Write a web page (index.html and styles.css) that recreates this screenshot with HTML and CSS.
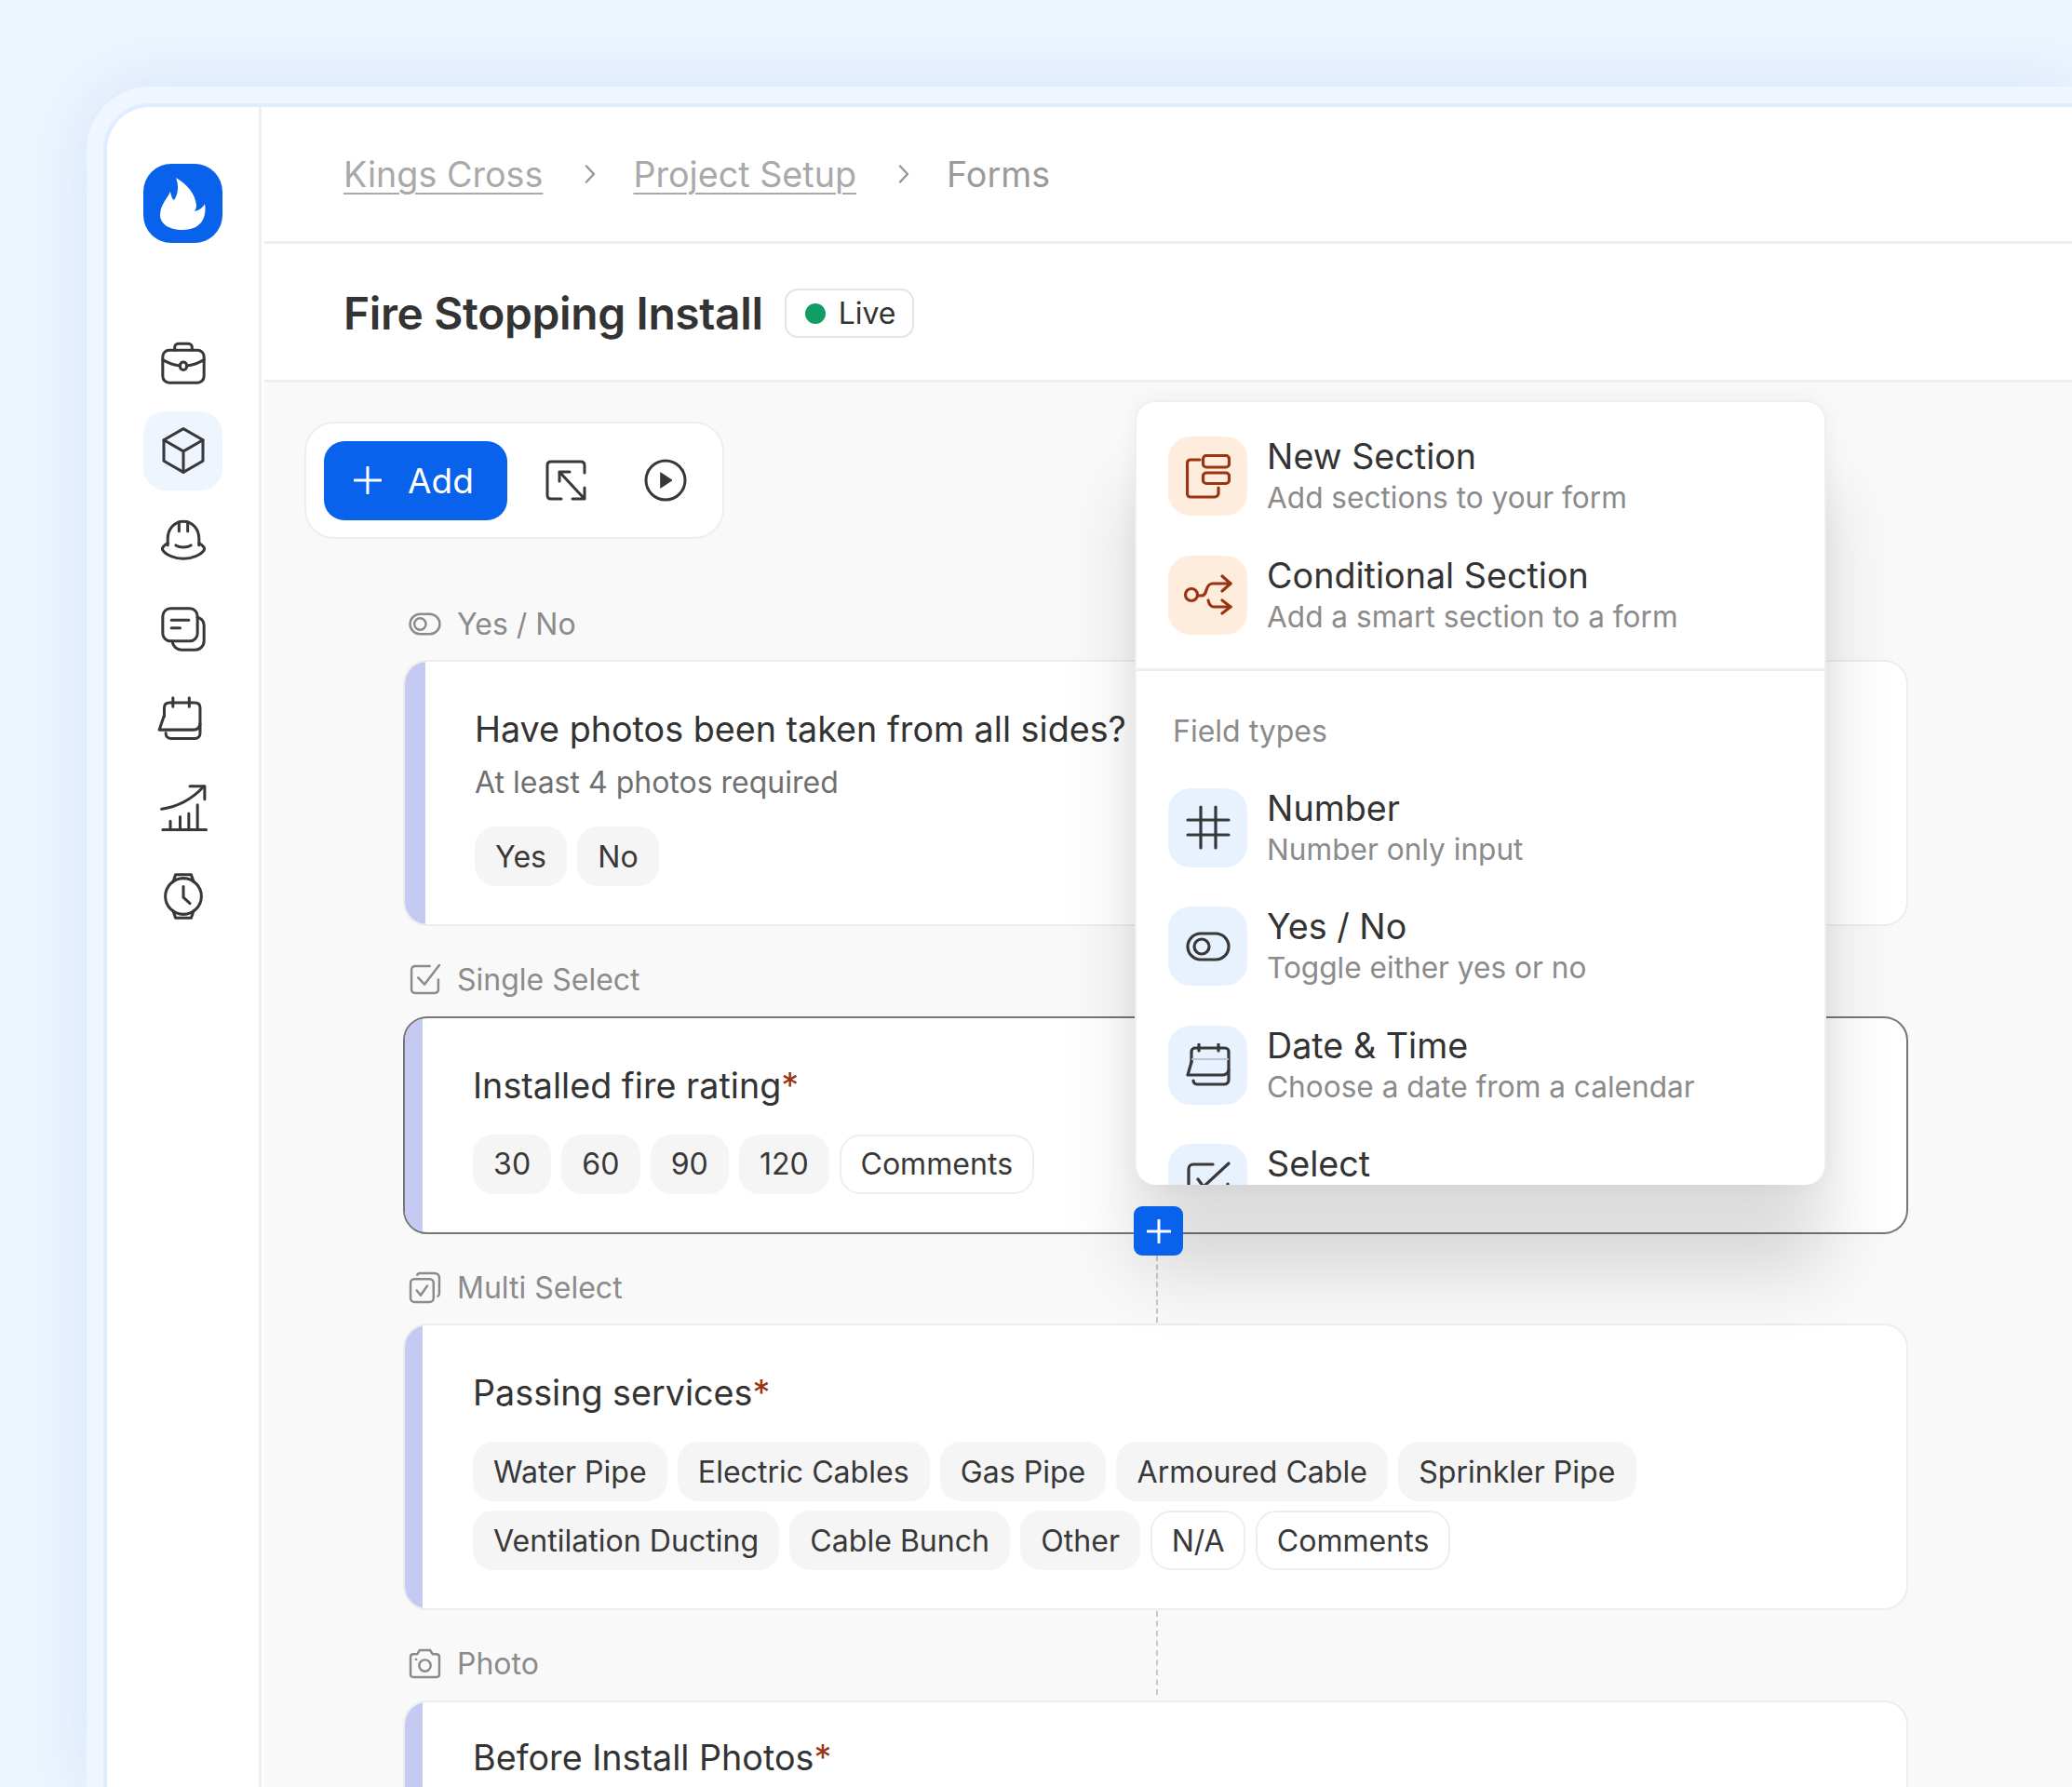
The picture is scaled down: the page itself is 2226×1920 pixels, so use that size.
FILE: index.html
```html
<!DOCTYPE html>
<html lang="en">
<head>
    <meta charset="UTF-8">
    <title>Fire Stopping Install</title>
    <meta name="viewport" content="width=device-width, initial-scale=1">
    <link rel="stylesheet" href="styles.css">
</head>

<body>
<div class="frame">
    <div class="window">
        <nav class="sidebar">
            <div class="logo">
                <svg viewBox="0 0 85 85" width="85" height="85"><path fill="#fff" d="M35 15C47 22 56 32 57 45C57 47 56 49 55 51C60 50 64 47 66 43C68 54 65 71 42 71C27 71 18 64 18 55C18 45 25 38 29 30C30 35 31 38 33 39C38 32 38 23 35 15Z"/></svg>
            </div>
            <div class="nav-list">
                <a class="nav-item">
                    <svg class="nav-icon" viewBox="0 0 24 24"><rect x="2.5" y="6.5" width="19" height="15" rx="3"/><path d="M8 6.5V5.2C8 4.2 8.7 3.5 9.7 3.5H14.3C15.3 3.5 16 4.2 16 5.2V6.5"/><path d="M2.5 11C6 13 8.5 13.5 10.5 13.7M13.5 13.7C15.5 13.5 18 13 21.5 11"/><rect x="10.5" y="12" width="3" height="3.6" rx="1.5"/></svg>
                </a>
                <a class="nav-item active">
                    <svg class="nav-icon" viewBox="0 0 24 24"><path d="M12 2L21 7.2V16.8L12 22L3 16.8V7.2Z"/><path d="M3 7.2L12 12.4L21 7.2M12 12.4V22"/></svg>
                </a>
                <a class="nav-item">
                    <svg class="nav-icon" viewBox="0 0 24 24"><path d="M4.8 14.5V11.5C4.8 7 8 3.5 12 3.5S19.2 7 19.2 11.5V14.5"/><path d="M10 3.8V8M14 3.8V8"/><path d="M4.8 13.5C3.2 14.5 1.8 15.7 2.5 16.8C4 19 8 20.7 12 20.7S20 19 21.5 16.8C22.2 15.7 20.8 14.5 19.2 13.5"/><path d="M8.5 14.5C10 15.7 14 15.7 15.5 14.5"/></svg>
                </a>
                <a class="nav-item">
                    <svg class="nav-icon" viewBox="0 0 24 24"><rect x="2.5" y="2.5" width="16" height="15" rx="3.5"/><path d="M18.4 6.5C20.3 7 21.5 8.4 21.5 10.2V17.5C21.5 19.7 19.7 21.5 17.5 21.5H11C9 21.5 7.2 20 6.8 17.5"/><path d="M6.5 7.8H14.5M6.5 11.5H10.5"/></svg>
                </a>
                <a class="nav-item">
                    <svg class="nav-icon" viewBox="0 0 24 24"><path d="M3.2 11V7C3.2 5.5 4.2 4.7 5.7 4.7H17.2C18.7 4.7 19.7 5.5 19.7 7V18.7C19.7 20.2 18.7 21.2 17.2 21.2H6.4C4.9 21.2 3.9 20.2 3.9 18.7"/><path d="M3.2 10.5L0.9 17.2H16.7C18.4 17.2 19.4 16 19.7 14.5"/><path d="M7.2 2.5V6.5M14.7 2.5V6.5"/></svg>
                </a>
                <a class="nav-item">
                    <svg class="nav-icon" viewBox="0 0 24 24"><path d="M2.5 22.5H22.5M6 22V18.5M10.5 22V16.5M14.5 22V15M18.5 22V11"/><path d="M2 13C9 12 15.5 9 21.5 2.5"/><path d="M15 2.5H21.8V8.5"/></svg>
                </a>
                <a class="nav-item">
                    <svg class="nav-icon" viewBox="0 0 24 24"><circle cx="12" cy="12" r="8.3"/><path d="M7.3 5.2L8.4 2H15.6L16.7 5.2M7.3 18.8L8.4 22H15.6L16.7 18.8"/><path d="M12 7.5V12.5L15 15.3"/></svg>
                </a>
            </div>
        </nav>

        <div class="main">
            <header class="crumbs">
                <a class="crumb-link">Kings Cross</a>
                <svg class="crumb-sep" viewBox="0 0 14 20"><path d="M3 1.5L11 10L3 18.5"/></svg>
                <a class="crumb-link">Project Setup</a>
                <svg class="crumb-sep" viewBox="0 0 14 20"><path d="M3 1.5L11 10L3 18.5"/></svg>
                <span class="crumb-current">Forms</span>
            </header>

            <div class="title-row">
                <h1 class="page-title">Fire Stopping Install</h1>
                <span class="badge"><i class="badge-dot"></i>Live</span>
            </div>

            <div class="content">
                <div class="toolbar">
                    <button type="button" class="add-button">
                        <svg viewBox="0 0 30 30" width="30" height="30"><path d="M15 1V29M1 15H29"/></svg>
                        Add
                    </button>
                    <svg class="tool-icon tool-expand" viewBox="0 0 44 44"><path d="M17 42H6C3.5 42 2 40.5 2 38V6C2 3.5 3.5 2 6 2H38C40.5 2 42 3.5 42 6V14"/><path d="M15 13L41 41M15 23V13H26M29 42H42V30"/></svg>
                    <svg class="tool-icon tool-play" viewBox="0 0 46 46"><circle cx="23" cy="23" r="21"/><path class="solid" d="M18 15L30 23L18 31Z"/></svg>
                </div>

                <section class="field">
                    <div class="field-label">
                        <svg class="label-icon" viewBox="0 0 34 24"><rect x="1.5" y="1.5" width="31" height="21" rx="10.5"/><circle cx="12" cy="12" r="6"/></svg>
                        Yes / No
                    </div>
                    <div class="card">
                        <div class="card-band wide"></div>
                        <div class="card-body first">
                            <h2 class="card-title">Have photos been taken from all sides?</h2>
                            <p class="card-note">At least 4 photos required</p>
                            <div class="chips">
                                <span class="chip">Yes</span>
                                <span class="chip">No</span>
                            </div>
                        </div>
                    </div>
                </section>

                <section class="field">
                    <div class="field-label">
                        <svg class="label-icon" viewBox="0 0 34 34"><path d="M22 3H7C4.5 3 3 4.5 3 7V27C3 29.5 4.5 31 7 31H27C29.5 31 31 29.5 31 27V17"/><path d="M10 15L16.5 22L32 2"/></svg>
                        Single Select
                    </div>
                    <div class="card selected">
                        <div class="card-band"></div>
                        <div class="card-body">
                            <h2 class="card-title">Installed fire rating<span class="required">*</span></h2>
                            <div class="chips">
                                <span class="chip">30</span>
                                <span class="chip">60</span>
                                <span class="chip">90</span>
                                <span class="chip">120</span>
                                <span class="chip outline">Comments</span>
                            </div>
                        </div>
                    </div>
                </section>

                <section class="field">
                    <div class="field-label">
                        <svg class="label-icon" viewBox="0 0 34 34"><rect x="2" y="8" width="24" height="24" rx="4"/><path d="M9 3.5C9.5 2.5 10.5 2 12 2H27C30 2 32 4 32 7V23C32 24.5 31.5 25.5 30.5 26"/><path d="M8.5 20L12.5 25L19.5 15"/></svg>
                        Multi Select
                    </div>
                    <div class="card">
                        <div class="card-band"></div>
                        <div class="card-body">
                            <h2 class="card-title">Passing services<span class="required">*</span></h2>
                            <div class="chips">
                                <span class="chip">Water Pipe</span>
                                <span class="chip">Electric Cables</span>
                                <span class="chip">Gas Pipe</span>
                                <span class="chip">Armoured Cable</span>
                                <span class="chip">Sprinkler Pipe</span>
                                <span class="chip">Ventilation Ducting</span>
                                <span class="chip">Cable Bunch</span>
                                <span class="chip">Other</span>
                                <span class="chip outline">N/A</span>
                                <span class="chip outline">Comments</span>
                            </div>
                        </div>
                    </div>
                </section>

                <section class="field">
                    <div class="field-label">
                        <svg class="label-icon" viewBox="0 0 34 34"><path d="M5 7H9L11.5 3H22.5L25 7H29C31 7 32 8.5 32 10V28C32 30 30.5 31 29 31H5C3 31 2 29.5 2 28V10C2 8.5 3 7 5 7Z"/><circle cx="17" cy="19" r="6"/><path d="M7.5 12.5H8"/></svg>
                        Photo
                    </div>
                    <div class="card">
                        <div class="card-band"></div>
                        <div class="card-body tight">
                            <h2 class="card-title">Before Install Photos<span class="required">*</span></h2>
                        </div>
                    </div>
                </section>
            </div>
        </div>
    </div>
</div>

<i class="connector connector-a"></i>
<i class="connector connector-b"></i>

<div class="popup">
    <div class="popup-group top">
        <div class="popup-item">
            <div class="popup-icon warm">
                <svg viewBox="0 0 48 48" width="48" height="48"><path d="M15 6H5C3 6 1.5 7.5 1.5 9.5V42.5C1.5 44.5 3 46 5 46H31C33 46 35 44.5 35 42V36"/><rect x="18.5" y="1.5" width="28" height="12.5" rx="3.5"/><rect x="18.5" y="20" width="28" height="11.5" rx="3.5"/></svg>
            </div>
            <div class="popup-text">
                <div class="popup-title">New Section</div>
                <div class="popup-note">Add sections to your form</div>
            </div>
        </div>
        <div class="popup-item">
            <div class="popup-icon warm">
                <svg viewBox="0 0 52 48" width="52" height="48"><circle cx="8" cy="24" r="6.5"/><path d="M15 25H19C22 25 23 23 24 19C25.5 14 27 12 31 12H50"/><path d="M41 4L50 12L41 20"/><path d="M26 30C27 34.5 29 37 32 37H50"/><path d="M41 30L50 37L41 44"/></svg>
            </div>
            <div class="popup-text">
                <div class="popup-title">Conditional Section</div>
                <div class="popup-note">Add a smart section to a form</div>
            </div>
        </div>
    </div>
    <div class="popup-group">
        <div class="popup-heading">Field types</div>
        <div class="popup-item">
            <div class="popup-icon cool">
                <svg viewBox="0 0 48 48" width="48" height="48"><path d="M16 2V46M32 2V46M2 16H46M2 32H46"/></svg>
            </div>
            <div class="popup-text">
                <div class="popup-title">Number</div>
                <div class="popup-note">Number only input</div>
            </div>
        </div>
        <div class="popup-item">
            <div class="popup-icon cool">
                <svg viewBox="0 0 48 32" width="48" height="32"><rect x="2" y="2" width="44" height="28" rx="14"/><circle cx="17" cy="16" r="8"/></svg>
            </div>
            <div class="popup-text">
                <div class="popup-title">Yes / No</div>
                <div class="popup-note">Toggle either yes or no</div>
            </div>
        </div>
        <div class="popup-item">
            <div class="popup-icon cool">
                <svg viewBox="0 0 48 46" width="48" height="46"><path d="M6 20V9C6 6.5 8 5 10 5H42C44.5 5 46 7 46 9V39C46 42 44 44 41 44H12C9.5 44 8 42 8 40"/><path d="M6 20L2 34H39C42 34 45 32 46 29"/><path d="M14 1V8M35 1V8"/><path class="faint" d="M7 17H45"/></svg>
            </div>
            <div class="popup-text">
                <div class="popup-title">Date &amp; Time</div>
                <div class="popup-note">Choose a date from a calendar</div>
            </div>
        </div>
        <div class="popup-item">
            <div class="popup-icon cool">
                <svg viewBox="0 0 48 48" width="48" height="48"><path d="M29 3H8C5 3 3 5 3 8V40C3 43 5 45 8 45H40C43 45 45 43 45 40V24"/><path d="M13 19L19 27L46 2"/></svg>
            </div>
            <div class="popup-text">
                <div class="popup-title">Select</div>
            </div>
        </div>
    </div>
</div>

<button type="button" class="insert-button">
    <svg viewBox="0 0 26 26" width="26" height="26"><path d="M13 1V25M1 13H25"/></svg>
</button>

</body>
</html>
```

FILE: styles.css
```css
* {
    box-sizing: border-box;
}
html, body {
    margin: 0;
    padding: 0;
}
body {
    position: relative;
    width: 2226px;
    height: 1920px;
    overflow: hidden;
    background-color: #edf5fe;
    font-family: Inter, "Noto Sans", sans-serif;
    color: #333;
}
h1, h2, p {
    margin: 0;
}
svg {
    display: block;
    flex: none;
}
.frame {
    margin: 93px 0 0 93px;
    width: 2133px;
    height: 1827px;
    padding: 18px 0 0 18px;
    background-color: #eff6ff;
    border-top-left-radius: 68px;
    box-shadow: 0 0 70px rgba(120, 170, 240, 0.22);
}
.window {
    display: flex;
    height: 100%;
    background-color: #fff;
    border-style: solid none none solid;
    border-width: 4px;
    border-color: #e0ecff;
    border-top-left-radius: 50px;
    overflow: hidden;
}

/* sidebar */
.sidebar {
    flex: none;
    width: 166px;
    padding: 61px 0 0 39px;
    border-right: 3px solid #efefef;
}
.logo {
    width: 85px;
    height: 85px;
    border-radius: 30px;
    background-color: #0862ec;
}
.nav-list {
    display: flex;
    flex-direction: column;
    gap: 10.8px;
    margin-top: 85px;
}
.nav-item {
    display: flex;
    align-items: center;
    justify-content: center;
    width: 85px;
    height: 85px;
    border-radius: 24px;
}
.nav-item.active {
    background-color: #eff5ff;
}
.nav-icon {
    width: 56px;
    height: 56px;
    fill: none;
    stroke: #383838;
    stroke-width: 1.3;
    stroke-linecap: round;
    stroke-linejoin: round;
}

/* header rows */
.main {
    flex: 1;
    margin-left: 3px;
    min-width: 0;
}
.crumbs {
    display: flex;
    align-items: center;
    height: 147px;
    padding-left: 85px;
    font-size: 37.7px;
    border-bottom: 3px solid #efefef;
}
.crumb-link {
    color: #a9a9a9;
    text-decoration: underline;
    text-decoration-thickness: 2px;
    text-underline-offset: 6px;
}
.crumb-current {
    color: #9a9a9a;
}
.crumb-sep {
    width: 14px;
    height: 20px;
    margin: 0 39px 0 44px;
    fill: none;
    stroke: #999;
    stroke-width: 2.5;
    stroke-linecap: round;
    stroke-linejoin: round;
}
.title-row {
    display: flex;
    align-items: center;
    gap: 23px;
    height: 149px;
    padding: 3px 0 0 85px;
    border-bottom: 3px solid #eee;
}
.page-title {
    font-size: 47.9px;
    font-weight: 600;
    color: #333;
    letter-spacing: -0.35px;
}
.badge {
    display: flex;
    align-items: center;
    gap: 14px;
    height: 53px;
    padding: 0 17px 0 20px;
    border: 2px solid #e4e4e4;
    border-radius: 14px;
    font-size: 32px;
    color: #333;
}
.badge-dot {
    width: 22px;
    height: 22px;
    border-radius: 50%;
    background-color: #0f9d63;
}

/* canvas */
.content {
    height: 1600px;
    padding: 42px 0 0 43px;
    background-color: #f9f9f9;
}
.toolbar {
    display: flex;
    align-items: center;
    width: 451px;
    height: 126px;
    padding: 0 19px;
    background-color: #fff;
    border: 2px solid #eee;
    border-radius: 32px;
}
.add-button {
    display: flex;
    align-items: center;
    gap: 28px;
    width: 197px;
    height: 85px;
    padding: 0 0 0 32px;
    border: none;
    border-radius: 22px;
    background-color: #0862ec;
    color: #fff;
    font-family: inherit;
    font-size: 37px;
}
.add-button svg, .insert-button svg {
    fill: none;
    stroke: #fff;
    stroke-width: 3;
    stroke-linecap: round;
}
.tool-icon {
    fill: none;
    stroke: #383838;
    stroke-width: 3;
    stroke-linecap: round;
    stroke-linejoin: round;
}
.tool-icon .solid {
    fill: #383838;
    stroke-width: 1;
}
.tool-expand {
    width: 44px;
    height: 44px;
    margin-left: 41px;
}
.tool-play {
    width: 46px;
    height: 46px;
    margin-left: 62px;
}

/* form fields */
.field {
    margin: 71px 0 0 106px;
    width: 1617px;
}
.field + .field {
    margin-top: 37.5px;
}
.field-label {
    display: flex;
    align-items: center;
    gap: 17px;
    height: 40px;
    padding-left: 6px;
    margin-bottom: 19px;
    font-size: 32px;
    color: #8b8b8b;
}
.label-icon {
    width: 35px;
    height: 35px;
    fill: none;
    stroke: #8b8b8b;
    stroke-width: 2.4;
    stroke-linecap: round;
    stroke-linejoin: round;
}
.card {
    display: flex;
    background-color: #fff;
    border: 2px solid #ededed;
    border-radius: 26px;
    overflow: hidden;
}
.card.selected {
    border-color: #767676;
}
.card-band {
    flex: none;
    width: 19px;
    background-color: #c5caf2;
}
.card-band.wide {
    width: 22px;
}
.card-body {
    flex: 1;
    padding: 47px 0 41px 54px;
}
.card-body.first {
    padding-left: 53px;
}
.card-body.tight {
    padding-top: 34px;
}
.card-title {
    font-size: 37.7px;
    font-weight: 430;
    line-height: 50px;
    color: #333;
}
.required {
    color: #9a3412;
}
.card-note {
    margin-top: 13px;
    font-size: 32px;
    line-height: 40px;
    color: #707070;
}
.chips {
    display: flex;
    flex-wrap: wrap;
    gap: 10px 11px;
    max-width: 1300px;
    margin-top: 28px;
}
.card-note + .chips {
    margin-top: 27px;
}
.chip {
    display: flex;
    align-items: center;
    height: 64px;
    padding: 0 22.1px;
    border-radius: 22px;
    background-color: #f5f5f5;
    font-size: 32.1px;
    color: #383838;
}
.chip.outline {
    background-color: #fff;
    border: 2px solid #eee;
    padding: 0 20.5px;
}

/* popup menu, sits over the canvas */
.popup {
    position: absolute;
    left: 1219px;
    top: 430px;
    width: 743px;
    height: 843px;
    overflow: hidden;
    background-color: #fff;
    border: 2px solid #efefef;
    border-bottom: none;
    border-radius: 22px;
    box-shadow: 0 93px 80px rgba(0, 0, 0, 0.14), 0 0 24px rgba(0, 0, 0, 0.05);
    z-index: 3;
}
.popup-group {
    display: flex;
    flex-direction: column;
    gap: 42.5px;
    padding: 37px 0 0 34px;
}
.popup-group.top {
    height: 289px;
    border-bottom: 3px solid #eee;
}
.popup-heading {
    height: 45px;
    margin: 5px 0 -4px 5px;
    font-size: 32px;
    line-height: 45px;
    color: #8b8b8b;
}
.popup-item {
    display: flex;
    gap: 21px;
    height: 85px;
}
.popup-icon {
    display: flex;
    flex: none;
    align-items: center;
    justify-content: center;
    width: 85px;
    height: 85px;
    border-radius: 24px;
}
.popup-icon svg {
    fill: none;
    stroke-width: 3.2;
    stroke-linecap: round;
    stroke-linejoin: round;
}
.popup-icon .faint {
    stroke: #b9c6de;
    stroke-width: 2;
}
.popup-icon.warm {
    background-color: #feeddd;
    stroke: #9a3412;
}
.popup-icon.cool {
    background-color: #e8f1fe;
    stroke: #383838;
}
.popup-text {
    margin-top: -1px;
}
.popup-title {
    font-size: 37.7px;
    line-height: 45px;
    color: #333;
}
.popup-note {
    font-size: 31.6px;
    line-height: 44px;
    color: #8b8b8b;
}

/* connectors and insert button */
.connector {
    position: absolute;
    left: 1242px;
    width: 0;
    border-left: 2px dashed #c9c9c9;
}
.connector-a {
    top: 1349px;
    height: 72px;
}
.connector-b {
    top: 1731px;
    height: 90px;
}
.insert-button {
    position: absolute;
    left: 1218px;
    top: 1296px;
    display: flex;
    align-items: center;
    justify-content: center;
    width: 53px;
    height: 53px;
    padding: 0;
    border: none;
    border-radius: 9px;
    background-color: #0862ec;
    z-index: 4;
}
```
